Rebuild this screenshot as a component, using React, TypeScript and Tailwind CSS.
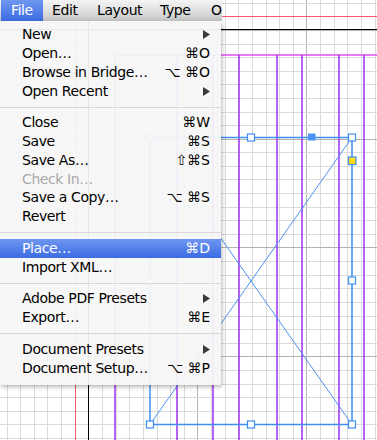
import React from "react";

type Item =
  | "sep"
  | { label: string; sc?: string; arrow?: boolean; disabled?: boolean; active?: boolean };

const items: Item[] = [
  { label: "New", arrow: true },
  { label: "Open…", sc: "⌘O" },
  { label: "Browse in Bridge…", sc: "⌥ ⌘O" },
  { label: "Open Recent", arrow: true },
  "sep",
  { label: "Close", sc: "⌘W" },
  { label: "Save", sc: "⌘S" },
  { label: "Save As…", sc: "⇧⌘S" },
  { label: "Check In…", disabled: true },
  { label: "Save a Copy…", sc: "⌥ ⌘S" },
  { label: "Revert" },
  "sep",
  { label: "Place…", sc: "⌘D", active: true },
  { label: "Import XML…" },
  "sep",
  { label: "Adobe PDF Presets", arrow: true },
  { label: "Export…", sc: "⌘E" },
  "sep",
  { label: "Document Presets", arrow: true },
  { label: "Document Setup…", sc: "⌥ ⌘P" },
];

const BLUE = "#3f8ef4";

function Canvas() {
  const vx: { x: number; major: boolean }[] = [];
  for (let k = 0; k < 28; k++) {
    vx.push({ x: Math.round(6.6 + 13.63 * k) + 0.5, major: (k - 6) % 8 === 0 });
  }
  const hy: { y: number; major: boolean }[] = [];
  for (let k = 0; k < 33; k++) {
    hy.push({ y: Math.round(2.7 + 13.6 * k) + 0.5, major: (k - 2) % 8 === 0 });
  }
  const purple = [115, 177, 213, 239, 277, 302, 339, 364];
  const handles: [number, number][] = [
    [150, 137.5],
    [251, 137.5],
    [352, 137.5],
    [352, 280.5],
    [352, 424.5],
    [251, 424.5],
    [150, 424.5],
    [150, 280.5],
  ];
  return (
    <svg
      className="absolute left-0 top-0"
      width={377}
      height={440}
      viewBox="0 0 377 440"
    >
      <rect x={0} y={0} width={377} height={440} fill="#ffffff" />
      {vx.map((v, i) => (
        <line key={"v" + i} x1={v.x} y1={0} x2={v.x} y2={440} stroke={v.major ? "#b4b4b4" : "#dadada"} strokeWidth={1} />
      ))}
      {hy.map((h, i) => (
        <line key={"h" + i} x1={0} y1={h.y} x2={377} y2={h.y} stroke={h.major ? "#b4b4b4" : "#dadada"} strokeWidth={1} />
      ))}
      <line x1={0} y1={16.5} x2={377} y2={16.5} stroke="#ff5a6a" strokeWidth={1} />
      <line x1={75.5} y1={0} x2={75.5} y2={440} stroke="#ee5670" strokeWidth={1} />
      <line x1={0} y1={29.5} x2={377} y2={29.5} stroke="#000000" strokeWidth={1} />
      <line x1={88.5} y1={0} x2={88.5} y2={440} stroke="#000000" strokeWidth={1} />
      <line x1={115} y1={55} x2={377} y2={55} stroke="#dc52ee" strokeWidth={1.4} />
      {purple.map((x, i) => (
        <line key={"p" + i} x1={x} y1={55} x2={x} y2={440} stroke="#9f2ff6" strokeWidth={1.5} />
      ))}
      <line x1={150} y1={137.5} x2={352} y2={424.5} stroke="#4b93f2" strokeWidth={1} />
      <line x1={352} y1={137.5} x2={150} y2={424.5} stroke="#4b93f2" strokeWidth={1} />
      <rect x={150} y={137.5} width={202} height={287} fill="none" stroke={BLUE} strokeWidth={1.5} />
      {handles.map(([x, y], i) => (
        <rect key={"hd" + i} x={x - 3.5} y={y - 3.5} width={7} height={7} fill="#ffffff" stroke={BLUE} strokeWidth={1.2} />
      ))}
      <rect x={308} y={133.5} width={7.5} height={7} fill="#4b93f4" />
      <rect x={348.5} y={157} width={7.5} height={7.5} fill="#ffe000" stroke={BLUE} strokeWidth={1.2} />
    </svg>
  );
}

function Arrow() {
  return (
    <svg width={7} height={9} viewBox="0 0 7 9" className="block">
      <polygon points="0,0 7,4.5 0,9" fill="#3a3a3a" />
    </svg>
  );
}

export default function App() {
  const font = { fontFamily: '"DejaVu Sans", "Liberation Sans", sans-serif' };
  return (
    <div className="relative w-[377px] h-[440px] overflow-hidden bg-white" style={font}>
      <Canvas />
      <div className="absolute left-0 top-0 w-[222px] h-[21px] flex items-stretch bg-[linear-gradient(to_bottom,#f4f4f4,#dedede_55%,#c4c4c4)] text-[14px] tracking-[-0.4px] text-black whitespace-nowrap">
        <div className="shrink-0 ml-[1px] w-[42px] pl-[10px] flex items-center text-white bg-[linear-gradient(to_bottom,#6f97f1,#3d6be3)]">
          File
        </div>
        <div className="shrink-0 w-[45px] pl-[9px] flex items-center">Edit</div>
        <div className="shrink-0 w-[63px] pl-[9px] flex items-center">Layout</div>
        <div className="shrink-0 w-[53px] pl-[9px] flex items-center">Type</div>
        <div className="shrink-0 pl-[7px] flex items-center">O</div>
      </div>
      <div className="absolute left-0 top-[21px] w-[221px] pt-[4.6px] pb-[7px] bg-[rgba(247,247,247,0.94)] shadow-[1px_2px_4px_rgba(0,0,0,0.28)] text-[14px] tracking-[-0.4px] whitespace-nowrap">
        {items.map((it, i) => {
          if (it === "sep") {
            return (
              <div key={i} className="h-[13px] flex items-center">
                <div className="w-full h-px bg-[#d9d9d9]" />
              </div>
            );
          }
          const color = it.active ? "text-white" : it.disabled ? "text-[#a9a9a9]" : "text-black";
          return (
            <div
              key={i}
              className={
                "h-[18.75px] flex items-center justify-between pl-[22px] pr-[11px] " +
                color +
                (it.active ? " bg-[linear-gradient(to_bottom,#6e96f1,#3d6ce4)]" : "")
              }
            >
              <span>{it.label}</span>
              {it.sc ? <span className="tracking-[0px]">{it.sc}</span> : null}
              {it.arrow ? <Arrow /> : null}
            </div>
          );
        })}
      </div>
    </div>
  );
}
